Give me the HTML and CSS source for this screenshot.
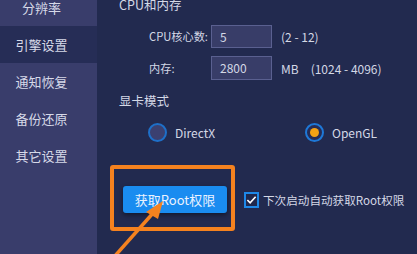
FILE: index.html
```html
<!DOCTYPE html>
<html>
<head>
<meta charset="utf-8">
<link rel="stylesheet" href="styles.css">
</head>
<body>
<div class="app">
  <nav class="sidebar">
    <div class="nav-item">分辨率</div>
    <div class="nav-item active">引擎设置</div>
    <div class="nav-item">通知恢复</div>
    <div class="nav-item">备份还原</div>
    <div class="nav-item">其它设置</div>
  </nav>
  <main class="main">
    <div class="section-title first">CPU和内存</div>
    <div class="form">
      <div class="row">
        <span class="label">CPU核心数:</span>
        <div class="input">5</div>
        <span class="hint">(2 - 12)</span>
      </div>
      <div class="row">
        <span class="label">内存:</span>
        <div class="input">2800</div>
        <span class="hint">MB</span>
        <span class="hint range">(1024 - 4096)</span>
      </div>
    </div>
    <div class="section-title second">显卡模式</div>
    <div class="radios">
      <div class="radio-opt dx"><span class="radio"></span><span>DirectX</span></div>
      <div class="radio-opt"><span class="radio checked"><span class="dot"></span></span><span>OpenGL</span></div>
    </div>
    <div class="actions">
      <button class="root-btn">获取Root权限</button>
      <label class="check-opt"><span class="checkbox"><svg width="12" height="10" viewBox="0 0 12 10"><path d="M1.5 5 L4.5 8 L10.5 1.5" fill="none" stroke="#ffffff" stroke-width="1.8"/></svg></span><span class="check-label">下次启动自动获取Root权限</span></label>
    </div>
  </main>
</div>
<div class="highlight-box"></div>
<svg class="arrow" width="417" height="254" viewBox="0 0 417 254">
  <line x1="114" y1="257" x2="154" y2="212" stroke="#f5821f" stroke-width="3.5"/>
  <polygon points="163,201 146,212 158,219" fill="#f5821f"/>
</svg>
</body>
</html>
```
FILE: styles.css
```css
html, body {
  margin: 0;
  padding: 0;
  width: 417px;
  height: 254px;
  overflow: hidden;
  background: #222a4f;
  font-family: "Noto Sans CJK SC", "Noto Sans", sans-serif;
  color: #d4d8e6;
}
.app {
  display: flex;
  height: 254px;
}
.sidebar {
  width: 97px;
  flex: none;
  background: #393d6b;
  margin-top: -11px;
  display: flex;
  flex-direction: column;
}
.nav-item {
  height: 37px;
  line-height: 37px;
  font-size: 13px;
  padding-right: 14px;
  text-align: center;
  color: #d6d9e8;
}
.nav-item.active {
  background: #262d56;
}
.main {
  flex: 1;
  padding-left: 22px;
  font-size: 12px;
}
.section-title {
  font-size: 12.5px;
  line-height: 18px;
  height: 18px;
}
.section-title.first { margin-top: -4px; }
.section-title.second { margin-top: 12px; }
.form {
  margin-top: 10px;
  padding-left: 30px;
  display: flex;
  flex-direction: column;
  gap: 8px;
}
.row {
  display: flex;
  align-items: center;
  height: 24px;
  white-space: nowrap;
}
.label {
  width: 62px;
  flex: none;
  white-space: nowrap;
  font-size: 11.2px;
}
.input {
  width: 61px;
  height: 24px;
  box-sizing: border-box;
  background: #383d68;
  border: 1px solid #5a6090;
  padding: 0 8px;
  line-height: 22px;
  flex: none;
}
.row:first-child .input { height: 23px; }
.hint { margin-left: 9px; }
.hint.range { margin-left: 12px; }
.radios {
  margin-top: 13px;
  display: flex;
  align-items: center;
  height: 19px;
  padding-left: 29px;
}
.radio-opt {
  display: flex;
  align-items: center;
  gap: 8px;
}
.radio-opt.dx { width: 157px; }
.radio {
  width: 19px;
  height: 19px;
  box-sizing: border-box;
  border-radius: 50%;
  border: 2px solid #1e6fc8;
  background: #3b4070;
  display: flex;
  align-items: center;
  justify-content: center;
}
.radio.checked {
  background: #262c55;
  border-color: #1e78d8;
}
.dot {
  width: 9px;
  height: 9px;
  border-radius: 50%;
  background: #f3a214;
}
.actions {
  margin-top: 44px;
  padding-left: 4px;
  display: flex;
  align-items: center;
}
.root-btn {
  width: 104px;
  height: 27px;
  border: none;
  border-radius: 3px;
  background: #1a8cf0;
  color: #eaf2ff;
  font-family: inherit;
  font-size: 13px;
  padding: 0;
  box-shadow: 0 2px 5px rgba(0, 0, 0, 0.45);
}
.check-opt {
  margin-left: 17px;
  display: flex;
  align-items: center;
  gap: 4px;
  white-space: nowrap;
}
.check-label { font-size: 11.6px; }
.checkbox {
  width: 15px;
  height: 16px;
  box-sizing: border-box;
  border: 2px solid #1e88e8;
  background: #20284d;
  display: flex;
  align-items: center;
  justify-content: center;
}
.highlight-box {
  position: absolute;
  left: 110px;
  top: 165px;
  width: 125px;
  height: 66px;
  box-sizing: border-box;
  border: 4px solid #f5821f;
  border-radius: 3px;
}
.arrow {
  position: absolute;
  left: 0;
  top: 0;
  pointer-events: none;
}
```
